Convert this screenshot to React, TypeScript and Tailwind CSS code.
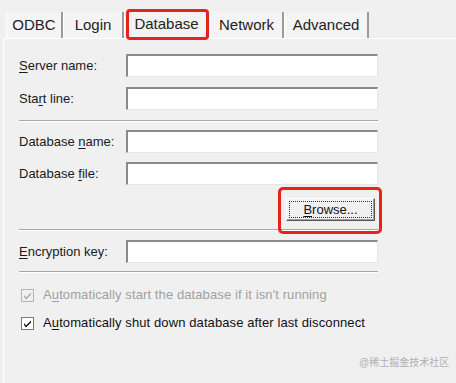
const Ul = ({ c }: { c: string }) => <span className="underline underline-offset-2">{c}</span>

const Field = ({ label, mt }: { label: React.ReactNode; mt: string }) => (
  <div className={`flex items-center h-[23px] ${mt}`}>
    <div className="w-[107px] text-[13px] text-[#1a1a1a]">{label}</div>
    <div className="w-[252px] h-[23px] bg-white border-t-2 border-l-2 border-r border-b border-t-[#8a8a8a] border-l-[#8a8a8a] border-r-[#e6e6e6] border-b-[#e6e6e6]" />
  </div>
)

const Sep = ({ mt }: { mt: string }) => (
  <div className={`w-[359px] h-[2px] border-t border-t-[#a8a8a8] border-b border-b-white ${mt}`} />
)

const Check = ({ disabled }: { disabled?: boolean }) => (
  <svg width="13" height="13" viewBox="0 0 13 13" className="shrink-0">
    <rect x="0.5" y="0.5" width="12" height="12" fill={disabled ? "#f0f0f0" : "#fff"} stroke={disabled ? "#b5b5b5" : "#7a7a7a"} />
    <path d="M3 6 L5 8.5 L10 3.5 L10 5.5 L5 10.5 L3 8 Z" fill={disabled ? "#a8a8a8" : "#111"} />
  </svg>
)

const Tab = ({ label, w, active }: { label: string; w: string; active?: boolean }) => (
  <div
    className={`${w} flex items-center justify-center text-[15px] text-[#222] border-r-2 border-r-[#9a9a9a] border-l border-l-white ${
      active ? "h-[28px] bg-[#f3f3f3] border-r-transparent" : "h-[26px] bg-[#f4f4f4]"
    }`}
  >
    {label}
  </div>
)

export default function App() {
  return (
    <div className="w-[456px] h-[383px] bg-[#f0f0f0] relative overflow-hidden" style={{ fontFamily: '"Liberation Sans", Arial, "Noto Sans CJK SC", sans-serif' }}>
      <div className="flex items-end h-[38px] pl-[6px]">
        <Tab label="ODBC" w="w-[57px]" />
        <Tab label="Login" w="w-[61px]" />
        <Tab label="Database" w="w-[86px]" active />
        <Tab label="Network" w="w-[74px]" />
        <Tab label="Advanced" w="w-[85px]" />
      </div>
      <div className="ml-[3px] h-[345px] border-l border-t border-white pl-[15px] pt-[15px]">
        <Field label={<><Ul c="S" />erver name:</>} mt="" />
        <Field label={<>Sta<Ul c="r" />t line:</>} mt="mt-[10px]" />
        <Sep mt="mt-[10px]" />
        <Field label={<>Database <Ul c="n" />ame:</>} mt="mt-[8px]" />
        <Field label={<>Database <Ul c="f" />ile:</>} mt="mt-[9px]" />
        <div className="flex w-[359px] justify-end pr-[3px] mt-[13px]">
          <div className="w-[89px] h-[23px] bg-[#f0f0f0] border border-t-white border-l-white border-r-[#555] border-b-[#555] shadow-[inset_-1px_-1px_0_#a0a0a0] p-[2px]">
            <div className="w-full h-full border border-dotted border-[#333] flex items-center justify-center text-[13px] text-[#111]">
              <span><Ul c="B" />rowse...</span>
            </div>
          </div>
        </div>
        <Sep mt="mt-[8px]" />
        <Field label={<><Ul c="E" />ncryption key:</>} mt="mt-[9px]" />
        <Sep mt="mt-[8px]" />
        <div className="flex items-center gap-[9px] mt-[14px] h-[16px] pl-[2px]">
          <Check disabled />
          <span className="text-[13px] tracking-[0.1px] text-[#a0a0a0]">A<Ul c="u" />tomatically start the database if it isn't running</span>
        </div>
        <div className="flex items-center gap-[9px] mt-[12px] h-[16px] pl-[2px]">
          <Check />
          <span className="text-[13px] tracking-[0.1px] text-[#111]">A<Ul c="u" />tomatically shut down database after last disconnect</span>
        </div>
      </div>
      <div className="absolute left-[126px] top-[9px] w-[83px] h-[31px] border-[3px] border-[#e5231b] rounded-[4px]" />
      <div className="absolute left-[278px] top-[187px] w-[104px] h-[47px] border-[3px] border-[#e5231b] rounded-[5px]" />
      <div className="absolute left-[359px] top-[355px] whitespace-nowrap text-[10px] text-[#b0b0b0]">@稀土掘金技术社区</div>
    </div>
  )
}
